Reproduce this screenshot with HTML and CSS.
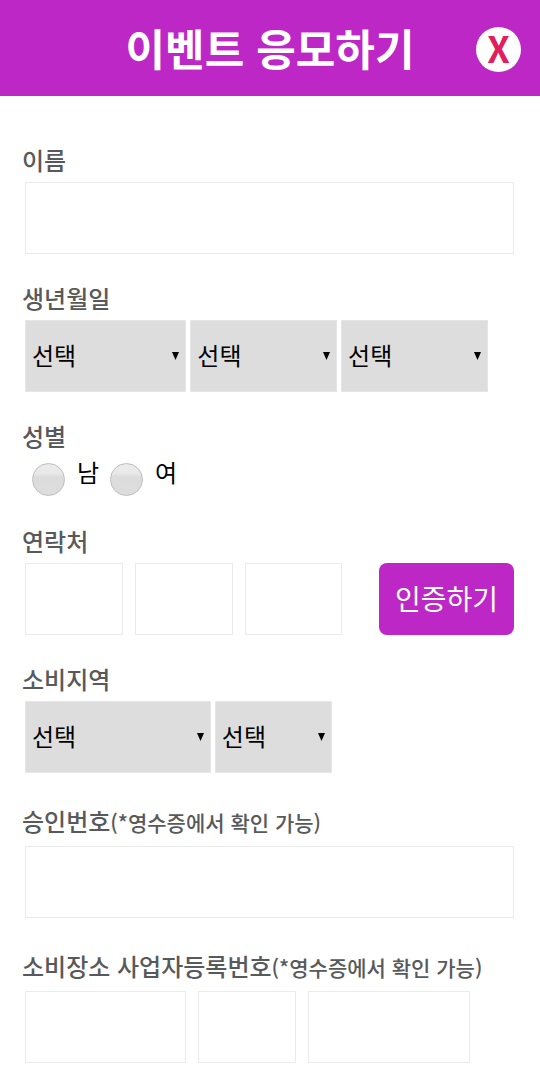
FILE: index.html
```html
<!DOCTYPE html>
<html lang="ko">

<head>
    <meta charset="utf-8">
    <meta name="viewport" content="width=device-width, initial-scale=1.0">
    <title>이벤트 응모하기</title>
    <link rel="stylesheet" href="styles.css">
</head>

<body>
    <header class="top">
        <h1>이벤트 응모하기</h1>
        <button type="button" class="close">X</button>
    </header>

    <form class="entry">
        <div class="group">
            <label class="title" for="name">이름</label>
            <div class="row">
                <input class="box full" type="text" id="name">
            </div>
        </div>

        <div class="group">
            <label class="title" for="year">생년월일</label>
            <div class="row selects">
                <select class="w33" id="year"><option>선택</option></select>
                <select class="w30" aria-label="월"><option>선택</option></select>
                <select class="w30" aria-label="일"><option>선택</option></select>
            </div>
        </div>

        <div class="group">
            <span class="title">성별</span>
            <div class="radios">
                <label><input type="radio" name="gender" value="m">남</label>
                <label><input type="radio" name="gender" value="f">여</label>
            </div>
        </div>

        <div class="group">
            <label class="title" for="tel1">연락처</label>
            <div class="row">
                <input class="box w20" type="tel" id="tel1">
                <input class="box w20" type="tel" aria-label="연락처 가운데 자리">
                <input class="box w20" type="tel" aria-label="연락처 끝자리">
                <button type="button" class="certify">인증하기</button>
            </div>
        </div>

        <div class="group">
            <label class="title" for="area">소비지역</label>
            <div class="row selects">
                <select class="w38" id="area"><option>선택</option></select>
                <select class="w24" aria-label="상세 지역"><option>선택</option></select>
            </div>
        </div>

        <div class="group noted">
            <label class="title" for="approval">승인번호<small>(*영수증에서 확인 가능)</small></label>
            <div class="row">
                <input class="box full" type="text" id="approval">
            </div>
        </div>

        <div class="group noted">
            <label class="title" for="biz1">소비장소 사업자등록번호<small>(*영수증에서 확인 가능)</small></label>
            <div class="row">
                <input class="box w33" type="text" id="biz1">
                <input class="box w20" type="text" aria-label="사업자등록번호 가운데 자리">
                <input class="box w33" type="text" aria-label="사업자등록번호 끝자리">
            </div>
        </div>
    </form>
</body>

</html>
```

FILE: styles.css
```css
* {
    margin: 0;
    padding: 0;
    box-sizing: border-box;
}

body {
    font-family: "Noto Sans CJK KR", sans-serif;
    font-size: 24px;
    line-height: 34px;
    color: #000;
    background: #fff;
}

button,
input,
select {
    font: inherit;
}

/* header */
.top {
    display: grid;
    grid-template-columns: 1fr auto 1fr;
    align-items: center;
    height: 96px;
    padding: 2px 19px 0;
    color: #fff;
    background: #bc27c6;
}

.top h1 {
    grid-column: 2;
    padding-bottom: 4px;
    font-size: 43px;
    line-height: 64px;
}

.close {
    justify-self: end;
    width: 45px;
    height: 45px;
    padding-bottom: 4px;
    border: 0;
    border-radius: 50%;
    font-size: 36px;
    font-weight: 700;
    line-height: 40px;
    color: #e0205c;
    background: #fff;
}

/* form */
.entry {
    display: flex;
    flex-direction: column;
    gap: 27px;
    padding: 47px 26px 16px 22px;
}

.title {
    display: block;
    margin-bottom: 5px;
    font-weight: 500;
    color: #58595b;
}

.title small {
    font-size: 21px;
}

.noted {
    padding-top: 4px;
}

.noted .title {
    margin-bottom: 7px;
}

.row {
    display: flex;
    gap: 12px;
    padding-left: 3px;
}

.selects {
    gap: 4px;
}

.box {
    height: 72px;
    padding: 0 6px;
    border: 1px solid #ebebeb;
    background: #fff;
}

select {
    height: 72px;
    padding: 0 6px 2px;
    border: 1px solid #e6e6e6;
    border-radius: 0;
    appearance: none;
    color: #000;
    background: #ddd url("data:image/svg+xml,%3Csvg xmlns='http://www.w3.org/2000/svg' width='7' height='8'%3E%3Cpath d='M0 0h7L3.5 8z'/%3E%3C/svg%3E") no-repeat right 6px center;
}

.full {
    width: 100%;
}

.w20 {
    width: 20%;
}

.w24 {
    width: 24%;
}

.w30 {
    width: 30%;
}

.w33 {
    width: 33%;
}

.w38 {
    width: 38%;
}

.radios {
    display: flex;
    gap: 11px;
    height: 42px;
    margin-top: -3px;
    padding-left: 10px;
}

.radios label {
    display: flex;
    gap: 12px;
}

.radios input {
    width: 33px;
    height: 33px;
    margin-top: 8px;
    border: 1px solid #bdbdbd;
    border-radius: 50%;
    appearance: none;
    background: linear-gradient(#ebebeb, #e9e9e9 30%, #dcdcdc 42%, #ddd);
}

.radios input:checked {
    background: #bc27c6;
}

.certify {
    height: 72px;
    margin-left: auto;
    padding: 0 16px 2px;
    border: 0;
    border-radius: 8px;
    font-size: 28px;
    color: #fff;
    background: #bc27c6;
}
```
